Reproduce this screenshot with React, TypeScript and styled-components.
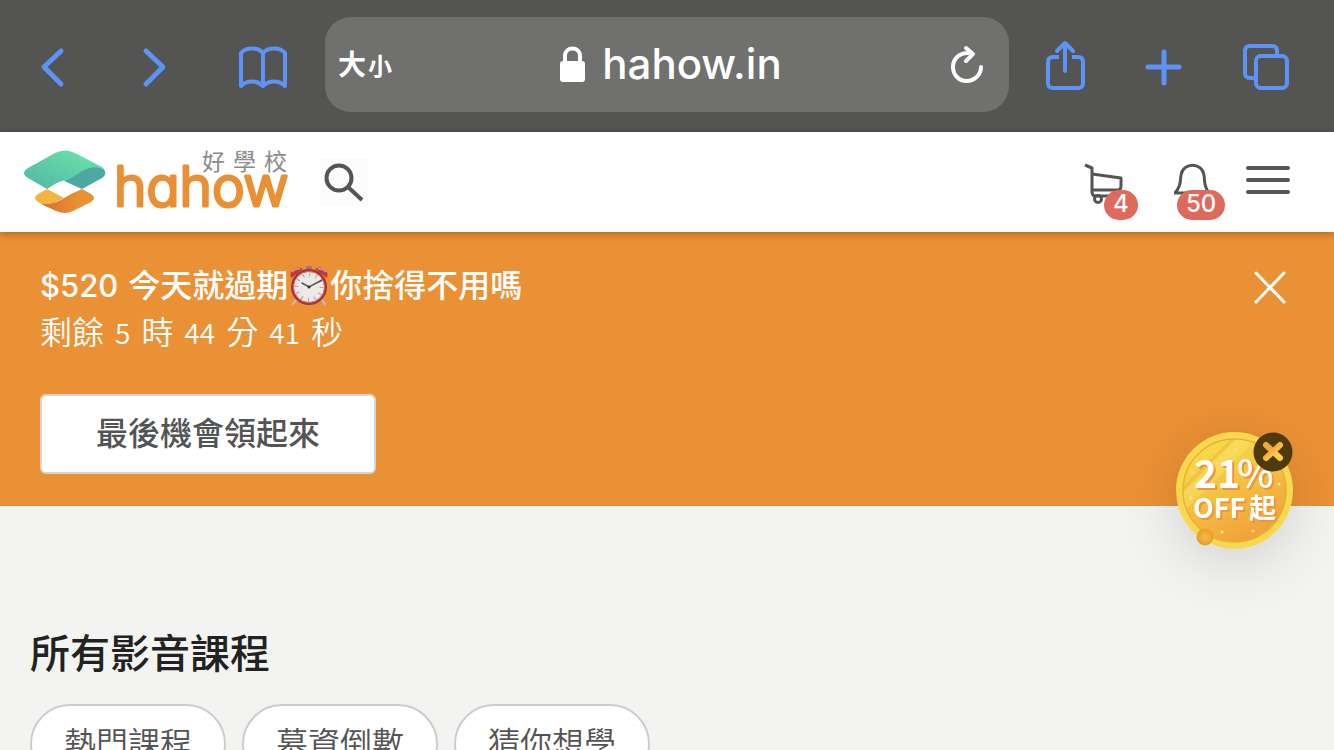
import React from "react";
import styled, { createGlobalStyle } from "styled-components";

const cjk = `"Noto Sans CJK TC", sans-serif`;

const GlobalStyle = createGlobalStyle`
  * { box-sizing: border-box; }
  body {
    margin: 0;
    background: #f3f3f1;
    font-family: Inter, ${cjk};
    color: #545454;
  }
  button { font: inherit; color: inherit; background: none; border: 0; padding: 0; cursor: pointer; }
  svg { display: block; }
`;

const Page = styled.div`
  position: relative;
  height: 100vh;
  overflow: hidden;
`;

const BrowserBar = styled.div`
  display: flex;
  align-items: center;
  height: 132px;
  padding: 0 40px 0 25px;
  background: #545452;
`;

const ToolGroup = styled.div<{ $gap: number }>`
  display: flex;
  gap: ${(p) => p.$gap}px;
`;

const ToolButton = styled.button`
  width: 56px;
  height: 56px;
  color: #5b93f6;
`;

const AddressBar = styled.div`
  flex: 1;
  display: grid;
  grid-template-columns: 1fr auto 1fr;
  align-items: center;
  height: 95px;
  margin: 0 29px 4px 36px;
  padding: 0 20px 0 13px;
  border-radius: 26px;
  background: #70706e;
  color: #fff;
`;

const TextSizeButton = styled.button`
  display: flex;
  align-items: baseline;
  gap: 2px;
  justify-self: start;
  font-family: ${cjk};
  font-size: 28px;
  line-height: 40px;
  font-weight: 700;
`;

const SmallGlyph = styled.span`
  font-size: 24px;
`;

const Domain = styled.div`
  display: flex;
  align-items: center;
  gap: 17px;
  margin-left: 14px;
  font-size: 42px;
  line-height: 52px;
  font-weight: 500;
`;

const ReloadButton = styled.button`
  justify-self: end;
`;

const SiteHeader = styled.header`
  position: relative;
  display: flex;
  align-items: center;
  height: 100px;
  padding: 0 40px 0 24px;
  background: #fff;
  box-shadow: 0 2px 8px rgba(0, 0, 0, 0.3);
`;

const LogoLink = styled.a`
  display: block;
`;

const SearchButton = styled.button`
  width: 48px;
  height: 48px;
  margin-left: 32px;
  background: #fcfcfc;
`;

const HeaderActions = styled.div`
  display: flex;
  align-items: center;
  margin-left: auto;
`;

const IconButton = styled.button<{ $space?: number }>`
  position: relative;
  height: 48px;
  margin-right: ${(p) => p.$space ?? 0}px;
`;

const Badge = styled.span<{ $left: number }>`
  position: absolute;
  top: 32px;
  left: ${(p) => p.$left}px;
  height: 30px;
  padding: 0 9px;
  border-radius: 15px;
  background: #de6a5b;
  color: #fff;
  font-size: 24px;
  line-height: 28px;
  font-weight: 500;
`;

const Promo = styled.section`
  display: flex;
  justify-content: space-between;
  align-items: flex-start;
  padding: 30px 44px 32px 40px;
  background: #eb9135;
  color: #fff;
`;

const PromoTitle = styled.h2`
  display: flex;
  align-items: center;
  margin: 0;
  font-size: 32px;
  line-height: 48px;
  font-weight: 500;
`;

const Amount = styled.span`
  margin-right: 10px;
  font-size: 31px;
`;

const Countdown = styled.p`
  display: flex;
  align-items: baseline;
  gap: 11px;
  height: 40px;
  margin: 0 0 44px;
  font-family: ${cjk};
  font-size: 32px;
  line-height: 40px;
  font-weight: 350;
`;

const CountdownNumber = styled.span`
  font-size: 28px;
`;

const ClaimButton = styled.button`
  display: block;
  min-width: 336px;
  height: 80px;
  border: 2px solid #d5d5d5;
  border-radius: 6px;
  background: #fff;
  color: #545454;
  font-size: 32px;
  font-weight: 500;
  line-height: 48px;
`;

const DismissButton = styled.button`
  margin-top: 8px;
`;

const Courses = styled.main`
  padding: 118px 30px 0;
`;

const SectionTitle = styled.h1`
  margin: 0 0 20px;
  color: #222;
  font-size: 40px;
  line-height: 60px;
  font-weight: 500;
`;

const Chips = styled.nav`
  display: flex;
  gap: 16px;
`;

const Chip = styled.button`
  height: 80px;
  padding: 0 32px;
  border: 2px solid #ccc;
  border-radius: 40px;
  background: #fff;
  font-size: 32px;
  line-height: 48px;
  font-weight: 350;
`;

const Coupon = styled.aside`
  position: absolute;
  top: 432px;
  right: 41px;
  width: 117px;
  height: 117px;
  border-radius: 50%;
  box-shadow: 0 12px 60px rgba(0, 0, 0, 0.15);
`;

const CouponText = styled.g`
  font-family: ${cjk};
  font-weight: 700;
  fill: #fff;
  filter: drop-shadow(2px 2px 0 #ee943a);
`;

const LogoCaption = styled.text`
  font-family: ${cjk};
  font-size: 23px;
  fill: #8b8b8b;
`;

const Wordmark = styled.text`
  font-family: Inter, sans-serif;
  font-size: 55px;
  font-weight: 300;
  font-feature-settings: "cv11";
  fill: #ea9034;
  stroke: #ea9034;
  stroke-width: 3px;
  stroke-linejoin: round;
`;

const CouponClose = styled.button`
  position: absolute;
  top: 0;
  right: 0;
`;

const LineIcon = ({ children, size = 56, width = 5 }: { children: React.ReactNode; size?: number; width?: number }) => (
  <svg width={size} height={size} viewBox={`0 0 ${size} ${size}`} fill="none" stroke="currentColor"
    strokeWidth={width} strokeLinecap="round" strokeLinejoin="round" aria-hidden="true">
    {children}
  </svg>
);

const Logo = () => (
  <svg width="264" height="92" viewBox="24 136 264 92" role="img" aria-label="hahow 好學校">
    <defs>
      <linearGradient id="mint" x1="0" y1="1" x2="1" y2="0">
        <stop offset="0.15" stopColor="#57bca8" /><stop offset="0.85" stopColor="#68e0a8" />
      </linearGradient>
      <linearGradient id="amber" x1="0" y1="0" x2="1" y2="0">
        <stop offset="0" stopColor="#d5702b" /><stop offset="0.7" stopColor="#ea9034" />
      </linearGradient>
    </defs>
    <path d="M64 181C72 177 81 167 94 166L103 168Q108 174 102 178L82 189Z" fill="#4ba8a5" />
    <path d="M28 168L55 153Q65 148 75 153L100 166Q104 168 104 170C93 163 82 171 73 177C66 181 62 180 55 184L47 189L28 178Q20 173 28 168Z" fill="url(#mint)" />
    <path d="M47 189L38 194Q32 198 38 202L43 205C51 206 55 202 64 198Z" fill="#f5b342" />
    <path d="M82 189L91 194Q97 198 91 202L73 211Q65 215 56 211L41 204C54 206 64 198 71 194Z" fill="url(#amber)" />
    <LogoCaption x="202" y="170">好</LogoCaption>
    <LogoCaption x="233" y="170">學</LogoCaption>
    <LogoCaption x="264" y="170">校</LogoCaption>
    <Wordmark x="114" y="206">hahow</Wordmark>
  </svg>
);

const AlarmClock = () => (
  <svg width="42" height="42" viewBox="0 0 42 42" role="img" aria-label="alarm clock">
    <path d="M9 34L5 39M33 34L37 39" stroke="#c9bfc0" strokeWidth="2" strokeLinecap="round" />
    <path d="M3 13Q1 7 6 4Q10 1 15 4ZM39 13Q41 7 36 4Q32 1 27 4Z" fill="#b93a43" />
    <path d="M4 7Q7 3 12 4M38 7Q35 3 30 4" stroke="#dd8a86" strokeWidth="2" fill="none" />
    <rect x="18" y="1" width="6" height="4" rx="1" fill="#9c7676" />
    <circle cx="21" cy="22" r="18" fill="#a8323a" />
    <circle cx="21" cy="22" r="15.500" fill="#eceae8" stroke="#ce676a" strokeWidth="1" />
    <circle cx="21" cy="22" r="12.500" fill="none" stroke="#de8b83" strokeWidth="4" strokeDasharray="1 5.545" />
    <path d="M14 18L21 22L34 15" stroke="#555" strokeWidth="1.500" fill="none" strokeLinecap="round" />
    <circle cx="21" cy="22" r="1.500" fill="#333" />
  </svg>
);

const CouponCoin = () => (
  <svg width="117" height="117" viewBox="0 0 117 117" role="img" aria-label="21% OFF 起">
    <defs>
      <linearGradient id="face" x1="0.25" y1="0" x2="0.75" y2="1">
        <stop offset="0.1" stopColor="#f8d849" /><stop offset="0.9" stopColor="#f1a43a" />
      </linearGradient>
      <clipPath id="faceClip"><circle cx="58.500" cy="58.500" r="51" /></clipPath>
      <radialGradient id="bead"><stop offset="0" stopColor="#f7b94a" /><stop offset="1" stopColor="#ec9d30" /></radialGradient>
    </defs>
    <circle cx="58.500" cy="58.500" r="58.500" fill="#f7d84e" />
    <circle cx="58.500" cy="58.500" r="51.500" fill="url(#face)" stroke="#e8b136" strokeWidth="1.500" />
    <g clipPath="url(#faceClip)">
      <path d="M0 77L78 0" stroke="#f9e06a" strokeWidth="14" opacity="0.5" />
      <path d="M4 60L58 6" stroke="#eab944" strokeWidth="3" opacity="0.6" />
    </g>
    <g fill="#fbe07b">
      <circle cx="17" cy="40" r="1.500" /><circle cx="59" cy="17" r="1.500" /><circle cx="15" cy="66" r="1.500" />
      <circle cx="103" cy="52" r="1.500" /><circle cx="46" cy="100" r="1.500" /><circle cx="77" cy="99" r="1.500" />
    </g>
    <CouponText>
      <text x="18" y="56" fontSize="39">21</text>
      <text x="61" y="56" fontSize="39" fontWeight="500">%</text>
      <text x="17" y="86" fontSize="27">OFF</text>
      <text x="73" y="86" fontSize="27">起</text>
    </CouponText>
    <circle cx="29" cy="105" r="8" fill="url(#bead)" stroke="#dfa22c" />
  </svg>
);

export default function App() {
  return (
    <Page>
      <GlobalStyle />
      <BrowserBar>
        <ToolGroup $gap={48}>
          <ToolButton aria-label="Back"><LineIcon><path d="M36 13L19 29L36 46" /></LineIcon></ToolButton>
          <ToolButton aria-label="Forward"><LineIcon><path d="M17 13L34 29L17 46" /></LineIcon></ToolButton>
          <ToolButton aria-label="Bookmarks">
            <LineIcon width={4}>
              <path d="M30 15C25 9 13 9 8 15V48C14 42 24 42 30 48C36 42 46 42 52 48V15C47 9 35 9 30 15V48" />
            </LineIcon>
          </ToolButton>
        </ToolGroup>
        <AddressBar>
          <TextSizeButton>大<SmallGlyph>小</SmallGlyph></TextSizeButton>
          <Domain>
            <svg width="26" height="38" viewBox="0 0 26 38" aria-hidden="true">
              <rect x="1" y="16" width="25" height="21" rx="3" fill="#fff" />
              <path d="M6 18V11C6 1 21 1 21 11V18" fill="none" stroke="#fff" strokeWidth="4" />
            </svg>
            hahow.in
          </Domain>
          <ReloadButton aria-label="Reload">
            <LineIcon size={44} width={4}>
              <path d="M23 11C14 11 8 17 8 25C8 33 14 39 21.500 39C29 39 36 33 36 25M21 6L28 12L21 19" />
            </LineIcon>
          </ReloadButton>
        </AddressBar>
        <ToolGroup $gap={44}>
          <ToolButton aria-label="Share">
            <LineIcon width={4}>
              <path d="M21 19H15Q10 19 10 24V45Q10 50 15 50H40Q45 50 45 45V24Q45 19 40 19H34" strokeLinecap="butt" />
              <path d="M27 33V6M19 13L27 5L35 13" />
            </LineIcon>
          </ToolButton>
          <ToolButton aria-label="New tab"><LineIcon><path d="M26 14V45M10 29H41" /></LineIcon></ToolButton>
          <ToolButton aria-label="Tabs">
            <LineIcon width={4}>
              <rect x="18" y="18" width="31" height="32" rx="5" />
              <path d="M39 17V13Q39 8 34 8H12Q7 8 7 13V35Q7 40 12 40H17" />
            </LineIcon>
          </ToolButton>
        </ToolGroup>
      </BrowserBar>

      <SiteHeader>
        <LogoLink href="#"><Logo /></LogoLink>
        <SearchButton aria-label="搜尋">
          <svg width="48" height="48" viewBox="0 0 48 48" fill="none" stroke="#545454" strokeWidth="4" aria-hidden="true">
            <circle cx="19" cy="20" r="12.500" /><path d="M28 29L42 42" />
          </svg>
        </SearchButton>
        <HeaderActions>
          <IconButton $space={42} aria-label="購物車 4">
            <svg width="48" height="48" viewBox="0 0 48 48" fill="none" stroke="#545454" strokeWidth="3" strokeLinejoin="round" aria-hidden="true">
              <path d="M1 7L8 10V34Q8 38 12 38H34M8 16L37 20V28Q37 32 34 32H8" />
              <circle cx="14" cy="41" r="3.500" />
            </svg>
            <Badge $left={20}>4</Badge>
          </IconButton>
          <IconButton $space={24} aria-label="通知 50">
            <svg width="48" height="48" viewBox="0 0 48 48" fill="none" stroke="#545454" strokeWidth="3" strokeLinejoin="round" aria-hidden="true">
              <path d="M1 35C8 27 6 22 7 17C9 4 28 4 30 17C31 22 29 27 35 35Z" />
            </svg>
            <Badge $left={3}>50</Badge>
          </IconButton>
          <IconButton aria-label="選單">
            <svg width="48" height="48" viewBox="0 0 48 48" fill="none" stroke="#545454" strokeWidth="4" strokeLinecap="round" aria-hidden="true">
              <path d="M2 10H42M2 22H42M2 34H42" />
            </svg>
          </IconButton>
        </HeaderActions>
      </SiteHeader>

      <Promo>
        <div>
          <PromoTitle><Amount>$520</Amount>今天就過期<AlarmClock />你捨得不用嗎</PromoTitle>
          <Countdown>
            <span>剩餘</span><CountdownNumber>5</CountdownNumber>
            <span>時</span><CountdownNumber>44</CountdownNumber>
            <span>分</span><CountdownNumber>41</CountdownNumber>
            <span>秒</span>
          </Countdown>
          <ClaimButton>最後機會領起來</ClaimButton>
        </div>
        <DismissButton aria-label="關閉">
          <svg width="40" height="36" viewBox="0 0 40 36" fill="none" stroke="#fff" strokeWidth="3" strokeLinecap="round" aria-hidden="true">
            <path d="M6 3L34 32M34 3L6 32" />
          </svg>
        </DismissButton>
      </Promo>

      <Courses>
        <SectionTitle>所有影音課程</SectionTitle>
        <Chips>
          <Chip>熱門課程</Chip>
          <Chip>募資倒數</Chip>
          <Chip>猜你想學</Chip>
        </Chips>
      </Courses>

      <Coupon>
        <CouponCoin />
        <CouponClose aria-label="關閉優惠">
          <svg width="40" height="40" viewBox="0 0 40 40" aria-hidden="true">
            <defs>
              <linearGradient id="cross" x1="0" y1="0" x2="1" y2="1">
                <stop offset="0.3" stopColor="#f2a73c" /><stop offset="0.7" stopColor="#f8cf48" />
              </linearGradient>
            </defs>
            <circle cx="20" cy="20" r="19.500" fill="#4f3a10" />
            <path d="M13 13L27 26M27 13L13 26" stroke="url(#cross)" strokeWidth="6" strokeLinecap="round" />
          </svg>
        </CouponClose>
      </Coupon>
    </Page>
  );
}
